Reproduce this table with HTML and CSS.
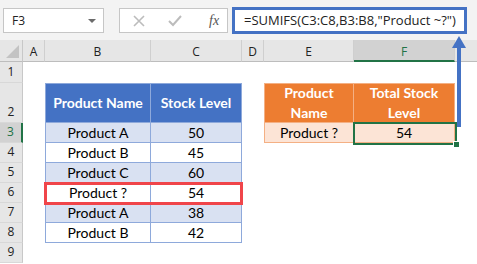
FILE: index.html
```html
<!DOCTYPE html>
<html lang="en">
  <head>
    <meta charset="UTF-8" />
    <title>SUMIFS with wildcard</title>
    <link rel="stylesheet" href="styles.css">
  </head>
  <body>
    <div class="toolbar">
      <div class="namebox">
        <span>F3</span>
        <span class="caret"></span>
      </div>
      <div class="fnbox">
        <svg width="12" height="12" viewBox="0 0 12 12">
          <path d="M1 1 L11 11 M11 1 L1 11" stroke="#bcbcbc" stroke-width="1.6" fill="none" />
        </svg>
        <svg width="14" height="12" viewBox="0 0 14 12">
          <path d="M1 6 L5 10 L13 1" stroke="#bcbcbc" stroke-width="2" fill="none" />
        </svg>
        <span class="fx">fx</span>
      </div>
      <div class="formula">=SUMIFS(C3:C8,B3:B8,"Product ~?")</div>
    </div>

    <div class="sheet">
      <!-- column headers -->
      <div class="corner"></div>
      <div class="ch">A</div>
      <div class="ch">B</div>
      <div class="ch">C</div>
      <div class="ch">D</div>
      <div class="ch">E</div>
      <div class="ch active">F</div>
      <div class="ch last"></div>

      <div class="rh">1</div>
      <div class="blank"></div>

      <div class="rh">2</div>
      <div></div>
      <div class="th first">Product Name</div>
      <div class="th">Stock Level</div>
      <div></div>
      <div class="th2 first">Product<br />Name</div>
      <div class="th2">Total Stock<br />Level</div>
      <div></div>

      <div class="rh active">3</div>
      <div></div>
      <div class="td band first">Product A</div>
      <div class="td band">50</div>
      <div></div>
      <div class="td2 first">Product ?</div>
      <div class="td2">54</div>
      <div></div>

      <div class="rh">4</div>
      <div></div>
      <div class="td first">Product B</div>
      <div class="td">45</div>
      <div class="rest"></div>

      <div class="rh">5</div>
      <div></div>
      <div class="td band first">Product C</div>
      <div class="td band">60</div>
      <div class="rest"></div>

      <div class="rh">6</div>
      <div></div>
      <div class="td first">Product ?</div>
      <div class="td">54</div>
      <div class="rest"></div>

      <div class="rh">7</div>
      <div></div>
      <div class="td band first">Product A</div>
      <div class="td band">38</div>
      <div class="rest"></div>

      <div class="rh">8</div>
      <div></div>
      <div class="td first">Product B</div>
      <div class="td">42</div>
      <div class="rest"></div>

      <div class="rh">9</div>
      <div class="blank"></div>

      <!-- overlays -->
      <div class="redbox"></div>
      <div class="selected"></div>
    </div>

    <svg class="arrow" width="16" height="92" viewBox="0 0 16 92">
      <polygon points="8,0 1,12 15,12" fill="#4472c4" />
      <rect x="6" y="11" width="4" height="80" fill="#4472c4" />
    </svg>
  </body>
</html>
```

FILE: styles.css
```css
body {
  margin: 0;
  background: #fff;
  font-family: 'Lato', 'Liberation Sans', sans-serif;
  color: #000;
  position: relative;
  overflow: hidden;
}

/* formula bar */
.toolbar {
  height: 40px;
  background: #f3f3f3;
  display: flex;
  align-items: flex-start;
  padding-top: 8px;
  box-sizing: border-box;
  font-family: 'Open Sans', 'DejaVu Sans', sans-serif;
}
.namebox {
  margin-left: 3px;
  width: 101px;
  height: 25px;
  box-sizing: border-box;
  background: #fff;
  border: 1px solid #c6c6c6;
  display: flex;
  align-items: center;
  justify-content: space-between;
  padding: 0 7px 0 8px;
  font-size: 12px;
  color: #222;
}
.caret {
  width: 0;
  height: 0;
  border-left: 4px solid transparent;
  border-right: 4px solid transparent;
  border-top: 4px solid #6b6b6b;
}
.fnbox {
  margin-left: 15px;
  width: 109px;
  height: 25px;
  box-sizing: border-box;
  background: #fff;
  border: 1px solid #c6c6c6;
  display: flex;
  align-items: center;
  gap: 23px;
  padding-left: 13px;
}
.fx {
  font-family: 'Liberation Serif', serif;
  font-style: italic;
  font-size: 14px;
  color: #555;
  margin-left: 4px;
}
.formula {
  margin-left: 4px;
  margin-top: -1px;
  width: 235px;
  height: 27px;
  box-sizing: border-box;
  border: 3px solid #4472c4;
  background: #fff;
  padding-left: 9px;
  font-size: 13px;
  line-height: 21px;
  color: #222;
  white-space: nowrap;
  overflow: hidden;
}

/* grid */
.sheet {
  display: grid;
  grid-template-columns: 23px 22px 106px 91px 22px 90px 101px 1fr;
  grid-template-rows: 22px 21px 40px repeat(7, 20px);
  font-size: 14px;
  position: relative;
}
.corner,
.ch,
.rh {
  background: #e6e6e6;
  font-family: 'Open Sans', 'DejaVu Sans', sans-serif;
  font-size: 12px;
  color: #222;
  box-sizing: border-box;
}
.corner {
  border-right: 1px solid #c8c8c8;
  border-bottom: 1px solid #bdbdbd;
  position: relative;
}
.corner::after {
  content: '';
  position: absolute;
  right: 3px;
  bottom: 3px;
  border-left: 13px solid transparent;
  border-bottom: 13px solid #c3c3c3;
}
.ch {
  display: flex;
  align-items: center;
  justify-content: center;
  border-right: 1px solid #cfcfcf;
  border-bottom: 1px solid #bdbdbd;
  padding-top: 2px;
}
.ch.last {
  border-right: none;
}
.ch.active {
  background: #d2d2d2;
  color: #217346;
  border-bottom: 2px solid #217346;
}
.rh {
  display: flex;
  align-items: flex-end;
  justify-content: center;
  line-height: 16px;
  padding-bottom: 2px;
  border-right: 1px solid #c8c8c8;
  border-bottom: 1px solid #d8d8d8;
}
.rh.active {
  background: #d2d2d2;
  color: #217346;
  border-right: 2px solid #217346;
}
.blank {
  grid-column: span 7;
}
.rest {
  grid-column: span 4;
}

/* tables */
.th,
.th2,
.td,
.td2 {
  display: flex;
  align-items: center;
  justify-content: center;
  text-align: center;
  box-sizing: border-box;
  border-right: 1px solid #8ea9db;
  border-bottom: 1px solid #8ea9db;
}
.th,
.th2 {
  font-weight: 700;
  color: #fff;
  border-top: 1px solid #8ea9db;
  line-height: 20px;
}
.th {
  background: #4472c4;
}
.th2 {
  background: #ed7d31;
  border-color: #f4b084;
}
.td {
  background: #fff;
}
.td.band {
  background: #d9e1f2;
}
.td2 {
  background: #fce4d6;
  border-color: #f4b084;
}
.first {
  border-left: 1px solid #8ea9db;
}
.th2.first,
.td2.first {
  border-left-color: #f4b084;
}

/* overlays, placed on grid areas without taking cells */
.redbox {
  position: absolute;
  grid-row: 7 / 8;
  grid-column: 3 / 5;
  top: -1px;
  left: -1px;
  right: -1px;
  bottom: -2px;
  border: 3px solid #f0454a;
}
.selected {
  position: absolute;
  grid-row: 4 / 5;
  grid-column: 7 / 8;
  top: -1px;
  left: -1px;
  right: -2px;
  bottom: -2px;
  border: 2px solid #217346;
}
.selected::after {
  content: '';
  position: absolute;
  right: -5px;
  bottom: -5px;
  width: 5px;
  height: 5px;
  background: #217346;
  border: 1px solid #fff;
}
.arrow {
  position: absolute;
  left: 451px;
  top: 36px;
}
```
